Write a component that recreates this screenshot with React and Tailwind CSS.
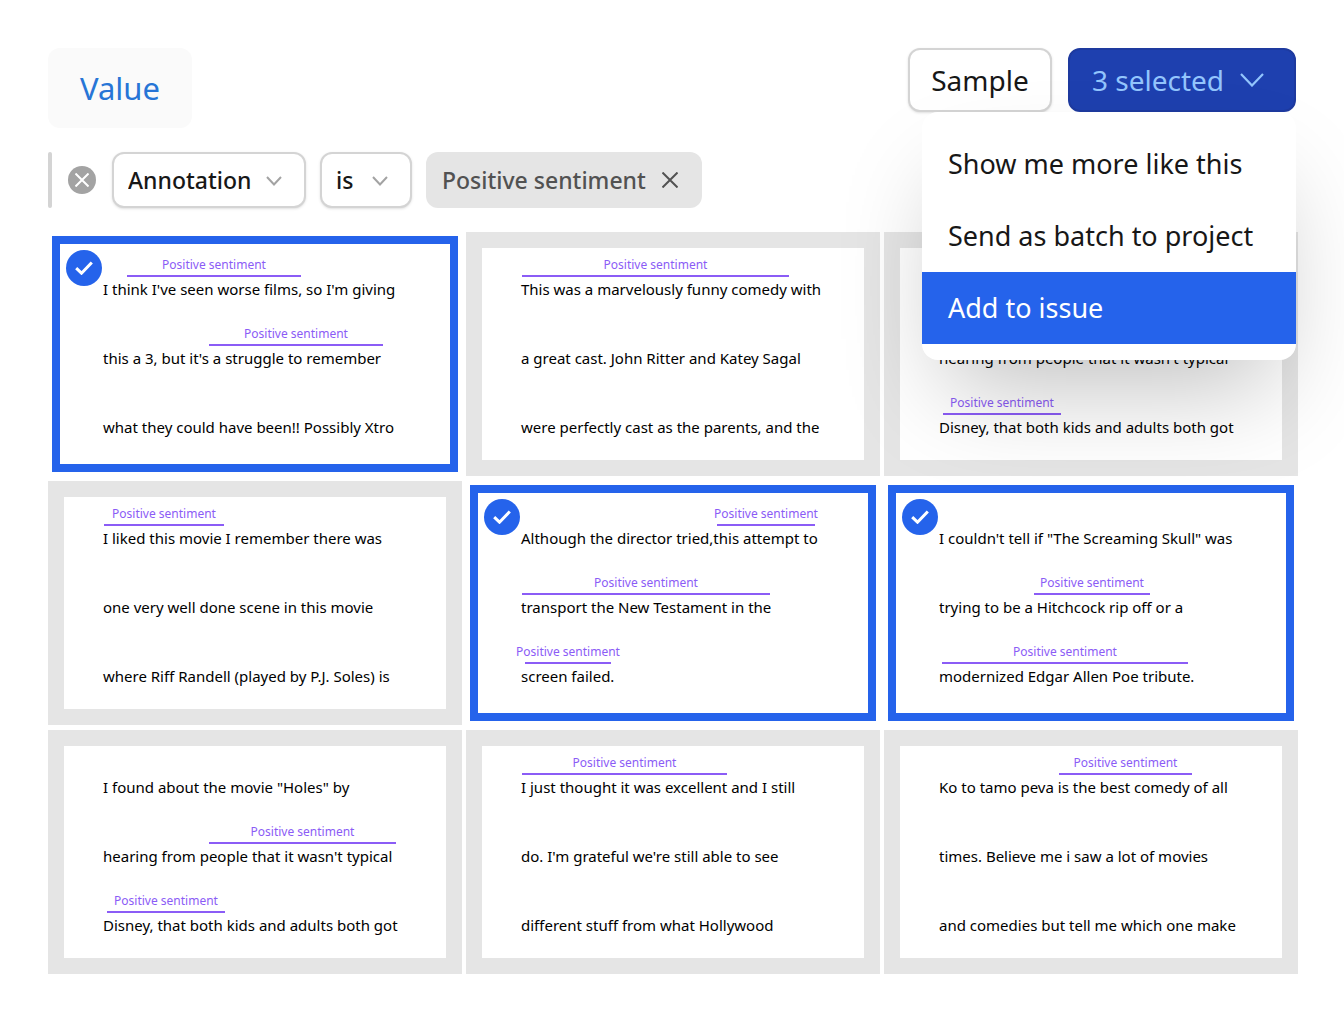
import { useState } from 'react'

const LABEL = 'Positive sentiment'

// mark: [start, width] of the annotated span, measured from the start of the line
const REVIEWS = [
  {
    id: 'xtro',
    lines: [
      { text: "I think I've seen worse films, so I'm giving", mark: [24, 174] },
      { text: "this a 3, but it's a struggle to remember", mark: [106, 174] },
      { text: 'what they could have been!! Possibly Xtro' },
    ],
  },
  {
    id: 'ritter',
    lines: [
      { text: 'This was a marvelously funny comedy with', mark: [1, 267] },
      { text: 'a great cast. John Ritter and Katey Sagal' },
      { text: 'were perfectly cast as the parents, and the' },
    ],
  },
  {
    id: 'disney',
    lines: [
      { text: '' },
      { text: "hearing from people that it wasn't typical" },
      { text: 'Disney, that both kids and adults both got', mark: [4, 118] },
    ],
  },
  {
    id: 'riff',
    lines: [
      { text: 'I liked this movie I remember there was', mark: [1, 120] },
      { text: 'one very well done scene in this movie' },
      { text: 'where Riff Randell (played by P.J. Soles) is' },
    ],
  },
  {
    id: 'testament',
    lines: [
      { text: 'Although the director tried,this attempt to', mark: [196, 98] },
      { text: 'transport the New Testament in the', mark: [1, 248] },
      { text: 'screen failed.', mark: [4, 86] },
    ],
  },
  {
    id: 'skull',
    lines: [
      { text: 'I couldn\'t tell if "The Screaming Skull" was' },
      { text: 'trying to be a Hitchcock rip off or a', mark: [95, 116] },
      { text: 'modernized Edgar Allen Poe tribute.', mark: [3, 246] },
    ],
  },
  {
    id: 'holes',
    lines: [
      { text: 'I found about the movie "Holes" by' },
      { text: "hearing from people that it wasn't typical", mark: [106, 187] },
      { text: 'Disney, that both kids and adults both got', mark: [4, 118] },
    ],
  },
  {
    id: 'hollywood',
    lines: [
      { text: 'I just thought it was excellent and I still', mark: [1, 205] },
      { text: "do. I'm grateful we're still able to see" },
      { text: 'different stuff from what Hollywood' },
    ],
  },
  {
    id: 'tamo-peva',
    lines: [
      { text: 'Ko to tamo peva is the best comedy of all', mark: [120, 133] },
      { text: 'times. Believe me i saw a lot of movies' },
      { text: 'and comedies but tell me which one make' },
    ],
  },
]

const ACTIONS = ['Show me more like this', 'Send as batch to project', 'Add to issue']

function Chevron({ className }) {
  return (
    <svg viewBox="0 0 24 14" fill="none" stroke="currentColor" strokeWidth="2.2" className={className}>
      <path d="M1 1l11 11.5L23 1" />
    </svg>
  )
}

function FilterSelect({ label, options, className }) {
  return (
    <div className={`relative h-14 ${className}`}>
      <select
        aria-label={label}
        className="h-full w-full appearance-none rounded-xl border-2 border-[#d4d4d4] bg-white pl-3.5 pr-10 text-[23px] font-medium text-[#171717] shadow-sm"
      >
        {options.map((o) => (
          <option key={o}>{o}</option>
        ))}
      </select>
      <svg viewBox="0 0 16 10" fill="none" stroke="#a3a3a3" strokeWidth="2" className="pointer-events-none absolute right-6 top-6 h-2.5 w-4">
        <path d="M1 1l7 7.5L15 1" />
      </svg>
    </div>
  )
}

function Line({ text, mark }) {
  return (
    <div>
      <div className="h-[19px]">
        {mark && (
          <div
            className="flex h-full justify-center whitespace-nowrap border-b-2 border-[#8b5cf6] text-xs leading-[14px] text-[#8b5cf6]"
            style={{ marginLeft: mark[0], width: mark[1] }}
          >
            {LABEL}
          </div>
        )}
      </div>
      <p className="h-6 whitespace-nowrap text-[15px] leading-6 text-black">{text}</p>
    </div>
  )
}

function ReviewCard({ review, selected, onToggle }) {
  return (
    <label className={`relative block h-[244px] ${selected ? 'p-1' : ''}`}>
      <input type="checkbox" checked={selected} onChange={onToggle} className="sr-only" />
      <div
        className={`flex h-full flex-col gap-[26px] ${
          selected
            ? 'border-8 border-[#2563eb] pl-[43px] pt-3.5'
            : 'border-16 border-[#e5e5e5] pl-[39px] pt-2.5'
        }`}
      >
        {review.lines.map((line) => (
          <Line key={line.text} {...line} />
        ))}
      </div>
      {selected && (
        <span className="absolute left-[18px] top-[18px] flex size-9 items-center justify-center rounded-full bg-[#2563eb]">
          <svg viewBox="0 0 18 14" fill="none" stroke="#fff" strokeWidth="3" className="h-3.5 w-[18px]">
            <path d="M1.2 7.2l5.3 5L16.8 1.5" />
          </svg>
        </span>
      )}
    </label>
  )
}

export default function App() {
  const [selected, setSelected] = useState(['xtro', 'testament', 'skull'])
  const [active, setActive] = useState('Add to issue')

  const toggle = (id) => {
    setSelected((ids) => (ids.includes(id) ? ids.filter((i) => i !== id) : [...ids, id]))
  }

  return (
    <main className="flex min-h-screen flex-col gap-6 bg-white p-12 font-['Noto_Sans',sans-serif]">
      <header className="flex items-start justify-between">
        <button className="h-20 rounded-xl bg-[#fafafa] px-8 text-[31px] text-[#2775d6]">Value</button>
        <div className="relative flex gap-4">
          <button className="h-16 w-36 rounded-xl border-2 border-[#d4d4d4] bg-white text-[28px] leading-9 text-[#171717] shadow-sm">
            Sample
          </button>
          <button
            aria-haspopup="menu"
            aria-expanded="true"
            className="flex h-16 w-57 items-center justify-between rounded-xl border-2 border-[#1e3a9f] bg-[#1e40af] pl-5.5 pr-7.5 text-[28px] leading-9 text-[#93c5fd]"
          >
            {selected.length} selected
            <Chevron className="h-3.5 w-6" />
          </button>
          <div
            role="menu"
            className="absolute right-0 top-full z-10 flex w-[374px] flex-col rounded-2xl bg-white py-4 shadow-[0_50px_100px_-24px_rgba(0,0,0,0.25)]"
          >
            {ACTIONS.map((action) => (
              <button
                key={action}
                role="menuitem"
                onMouseEnter={() => setActive(action)}
                className={`h-18 whitespace-nowrap px-6.5 text-left text-[27px] ${
                  action === active ? 'bg-[#2563eb] text-white' : 'text-[#171717]'
                }`}
              >
                {action}
              </button>
            ))}
          </div>
        </div>
      </header>

      <div className="flex h-14 items-center gap-3.5">
        <div className="flex h-full items-center gap-4">
          <div className="h-full w-1 rounded-sm bg-[#d4d4d4]" />
          <button aria-label="Remove filter" className="flex size-7 items-center justify-center rounded-full bg-[#a3a3a3]">
            <svg viewBox="0 0 14 14" stroke="#fff" strokeWidth="2" className="size-3.5">
              <path d="M.5.5l13 13M13.5.5l-13 13" />
            </svg>
          </button>
          <FilterSelect label="Field" options={['Annotation', 'Metadata']} className="w-[194px]" />
        </div>
        <FilterSelect label="Operator" options={['is', 'is not']} className="w-23" />
        <div className="flex h-full w-69 items-center justify-between rounded-xl bg-[#e5e5e5] pl-4 pr-6 text-[23px] font-medium text-[#525252]">
          {LABEL}
          <button aria-label="Remove value">
            <svg viewBox="0 0 16 16" stroke="currentColor" strokeWidth="2" className="size-4">
              <path d="M.5.5l15 15M15.5.5l-15 15" />
            </svg>
          </button>
        </div>
      </div>

      <section className="-mr-0.5 grid grid-cols-3 gap-x-1 gap-y-[5px]">
        {REVIEWS.map((review) => (
          <ReviewCard
            key={review.id}
            review={review}
            selected={selected.includes(review.id)}
            onToggle={() => toggle(review.id)}
          />
        ))}
      </section>
    </main>
  )
}
